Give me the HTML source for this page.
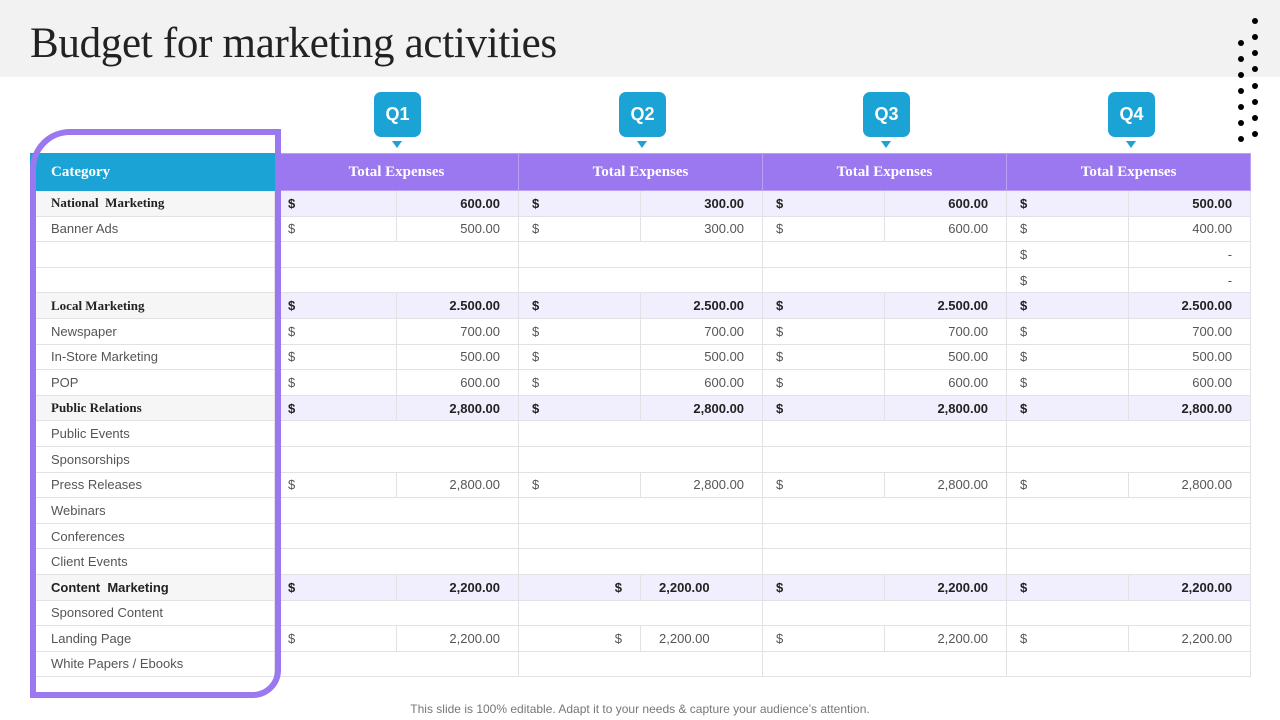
<!DOCTYPE html>
<html><head><meta charset="utf-8">
<style>
*{margin:0;padding:0;box-sizing:border-box}
body{width:1280px;height:720px;background:#fff;position:relative;overflow:hidden;font-family:"Liberation Sans",sans-serif}
.top{position:absolute;left:0;top:0;width:1280px;height:77px;background:#f2f2f2}
h1{position:absolute;left:30px;top:19px;font:400 43px "Liberation Serif",serif;color:#222;letter-spacing:-0.3px}
.dot{position:absolute;width:6px;height:6px;border-radius:50%;background:#000}
.q{position:absolute;top:92px;width:47px;height:45px;border-radius:7px;background:#1ba3d6;color:#fff;font:bold 18px "Liberation Sans",sans-serif;text-align:center;line-height:45px}
.tri{position:absolute;top:141px;width:0;height:0;border-left:5px solid transparent;border-right:5px solid transparent;border-top:7px solid #1ba3d6}
table{position:absolute;left:30px;top:153px;width:1220px;border-collapse:collapse;table-layout:fixed}
td,th{height:25.6px;border:1px solid #e2e2e6;font-size:13px;color:#555;padding:0 6px;white-space:nowrap}
th{height:37px;background:#9b78ef;color:#fff;font:bold 15px "Liberation Serif",serif;border:1px solid #b9a2f5}
th.cat{background:#1ba3d6;text-align:left;padding-left:20px;border-color:#1ba3d6}
td.c{padding-left:20px}
tr.b td{background:#f1eefd;font-weight:bold;color:#222}
tr.b td.c{background:#f6f6f6;font:bold 13px "Liberation Serif",serif}
tr.b td.cs{font-family:"Liberation Sans",sans-serif;font-size:13px}
td.d{padding-left:13px}
td.v{text-align:right;padding-right:18px}
.out{position:absolute;left:30px;top:129px;width:251px;height:569px;border:6px solid #9b78ef;border-radius:40px 0 28px 0}
.foot{position:absolute;top:702px;left:0;width:1280px;text-align:center;font-size:12px;color:#777}
</style></head><body>
<div class="top"></div>
<h1>Budget for marketing activities</h1>
<div class="dot" style="left:1252px;top:18px"></div><div class="dot" style="left:1252px;top:34px"></div><div class="dot" style="left:1252px;top:50px"></div><div class="dot" style="left:1252px;top:66px"></div><div class="dot" style="left:1252px;top:83px"></div><div class="dot" style="left:1252px;top:99px"></div><div class="dot" style="left:1252px;top:115px"></div><div class="dot" style="left:1252px;top:131px"></div>
<div class="dot" style="left:1238px;top:40px"></div><div class="dot" style="left:1238px;top:56px"></div><div class="dot" style="left:1238px;top:72px"></div><div class="dot" style="left:1238px;top:88px"></div><div class="dot" style="left:1238px;top:104px"></div><div class="dot" style="left:1238px;top:120px"></div><div class="dot" style="left:1238px;top:136px"></div><div class="dot" style="left:1238px;top:153px"></div>
<div class="q" style="left:374px">Q1</div><div class="tri" style="left:392px"></div>
<div class="q" style="left:619px">Q2</div><div class="tri" style="left:637px"></div>
<div class="q" style="left:863px">Q3</div><div class="tri" style="left:881px"></div>
<div class="q" style="left:1108px">Q4</div><div class="tri" style="left:1126px"></div>
<table>
<colgroup><col style="width:244px"><col style="width:122px"><col style="width:122px"><col style="width:122px"><col style="width:122px"><col style="width:122px"><col style="width:122px"><col style="width:122px"><col style="width:122px"></colgroup>
<tr><th class="cat">Category</th><th colspan="2">Total Expenses</th><th colspan="2">Total Expenses</th><th colspan="2">Total Expenses</th><th colspan="2">Total Expenses</th></tr>
<tr class="b"><td class="c">National&nbsp; Marketing</td><td class="d">$</td><td class="v">600.00</td><td class="d">$</td><td class="v">300.00</td><td class="d">$</td><td class="v">600.00</td><td class="d">$</td><td class="v">500.00</td></tr>
<tr><td class="c">Banner Ads</td><td class="d">$</td><td class="v">500.00</td><td class="d">$</td><td class="v">300.00</td><td class="d">$</td><td class="v">600.00</td><td class="d">$</td><td class="v">400.00</td></tr>
<tr><td class="c"></td><td colspan="2"></td><td colspan="2"></td><td colspan="2"></td><td class="d">$</td><td class="v">-</td></tr>
<tr><td class="c"></td><td colspan="2"></td><td colspan="2"></td><td colspan="2"></td><td class="d">$</td><td class="v">-</td></tr>
<tr class="b"><td class="c">Local Marketing</td><td class="d">$</td><td class="v">2.500.00</td><td class="d">$</td><td class="v">2.500.00</td><td class="d">$</td><td class="v">2.500.00</td><td class="d">$</td><td class="v">2.500.00</td></tr>
<tr><td class="c">Newspaper</td><td class="d">$</td><td class="v">700.00</td><td class="d">$</td><td class="v">700.00</td><td class="d">$</td><td class="v">700.00</td><td class="d">$</td><td class="v">700.00</td></tr>
<tr><td class="c">In-Store Marketing</td><td class="d">$</td><td class="v">500.00</td><td class="d">$</td><td class="v">500.00</td><td class="d">$</td><td class="v">500.00</td><td class="d">$</td><td class="v">500.00</td></tr>
<tr><td class="c">POP</td><td class="d">$</td><td class="v">600.00</td><td class="d">$</td><td class="v">600.00</td><td class="d">$</td><td class="v">600.00</td><td class="d">$</td><td class="v">600.00</td></tr>
<tr class="b"><td class="c">Public Relations</td><td class="d">$</td><td class="v">2,800.00</td><td class="d">$</td><td class="v">2,800.00</td><td class="d">$</td><td class="v">2,800.00</td><td class="d">$</td><td class="v">2,800.00</td></tr>
<tr><td class="c">Public Events</td><td colspan="2"></td><td colspan="2"></td><td colspan="2"></td><td colspan="2"></td></tr>
<tr><td class="c">Sponsorships</td><td colspan="2"></td><td colspan="2"></td><td colspan="2"></td><td colspan="2"></td></tr>
<tr><td class="c">Press Releases</td><td class="d">$</td><td class="v">2,800.00</td><td class="d">$</td><td class="v">2,800.00</td><td class="d">$</td><td class="v">2,800.00</td><td class="d">$</td><td class="v">2,800.00</td></tr>
<tr><td class="c">Webinars</td><td colspan="2"></td><td colspan="2"></td><td colspan="2"></td><td colspan="2"></td></tr>
<tr><td class="c">Conferences</td><td colspan="2"></td><td colspan="2"></td><td colspan="2"></td><td colspan="2"></td></tr>
<tr><td class="c">Client Events</td><td colspan="2"></td><td colspan="2"></td><td colspan="2"></td><td colspan="2"></td></tr>
<tr class="b"><td class="c cs">Content&nbsp; Marketing</td><td class="d">$</td><td class="v">2,200.00</td><td class="v" style="padding-right:18px">$</td><td style="padding-left:18px">2,200.00</td><td class="d">$</td><td class="v">2,200.00</td><td class="d">$</td><td class="v">2,200.00</td></tr>
<tr><td class="c">Sponsored Content</td><td colspan="2"></td><td colspan="2"></td><td colspan="2"></td><td colspan="2"></td></tr>
<tr><td class="c">Landing Page</td><td class="d">$</td><td class="v">2,200.00</td><td class="v" style="padding-right:18px">$</td><td style="padding-left:18px">2,200.00</td><td class="d">$</td><td class="v">2,200.00</td><td class="d">$</td><td class="v">2,200.00</td></tr>
<tr><td class="c">White Papers / Ebooks</td><td colspan="2"></td><td colspan="2"></td><td colspan="2"></td><td colspan="2"></td></tr>
</table>
<div class="out"></div>
<div class="foot">This slide is 100% editable. Adapt it to your needs &amp; capture your audience’s attention.</div>
</body></html>
